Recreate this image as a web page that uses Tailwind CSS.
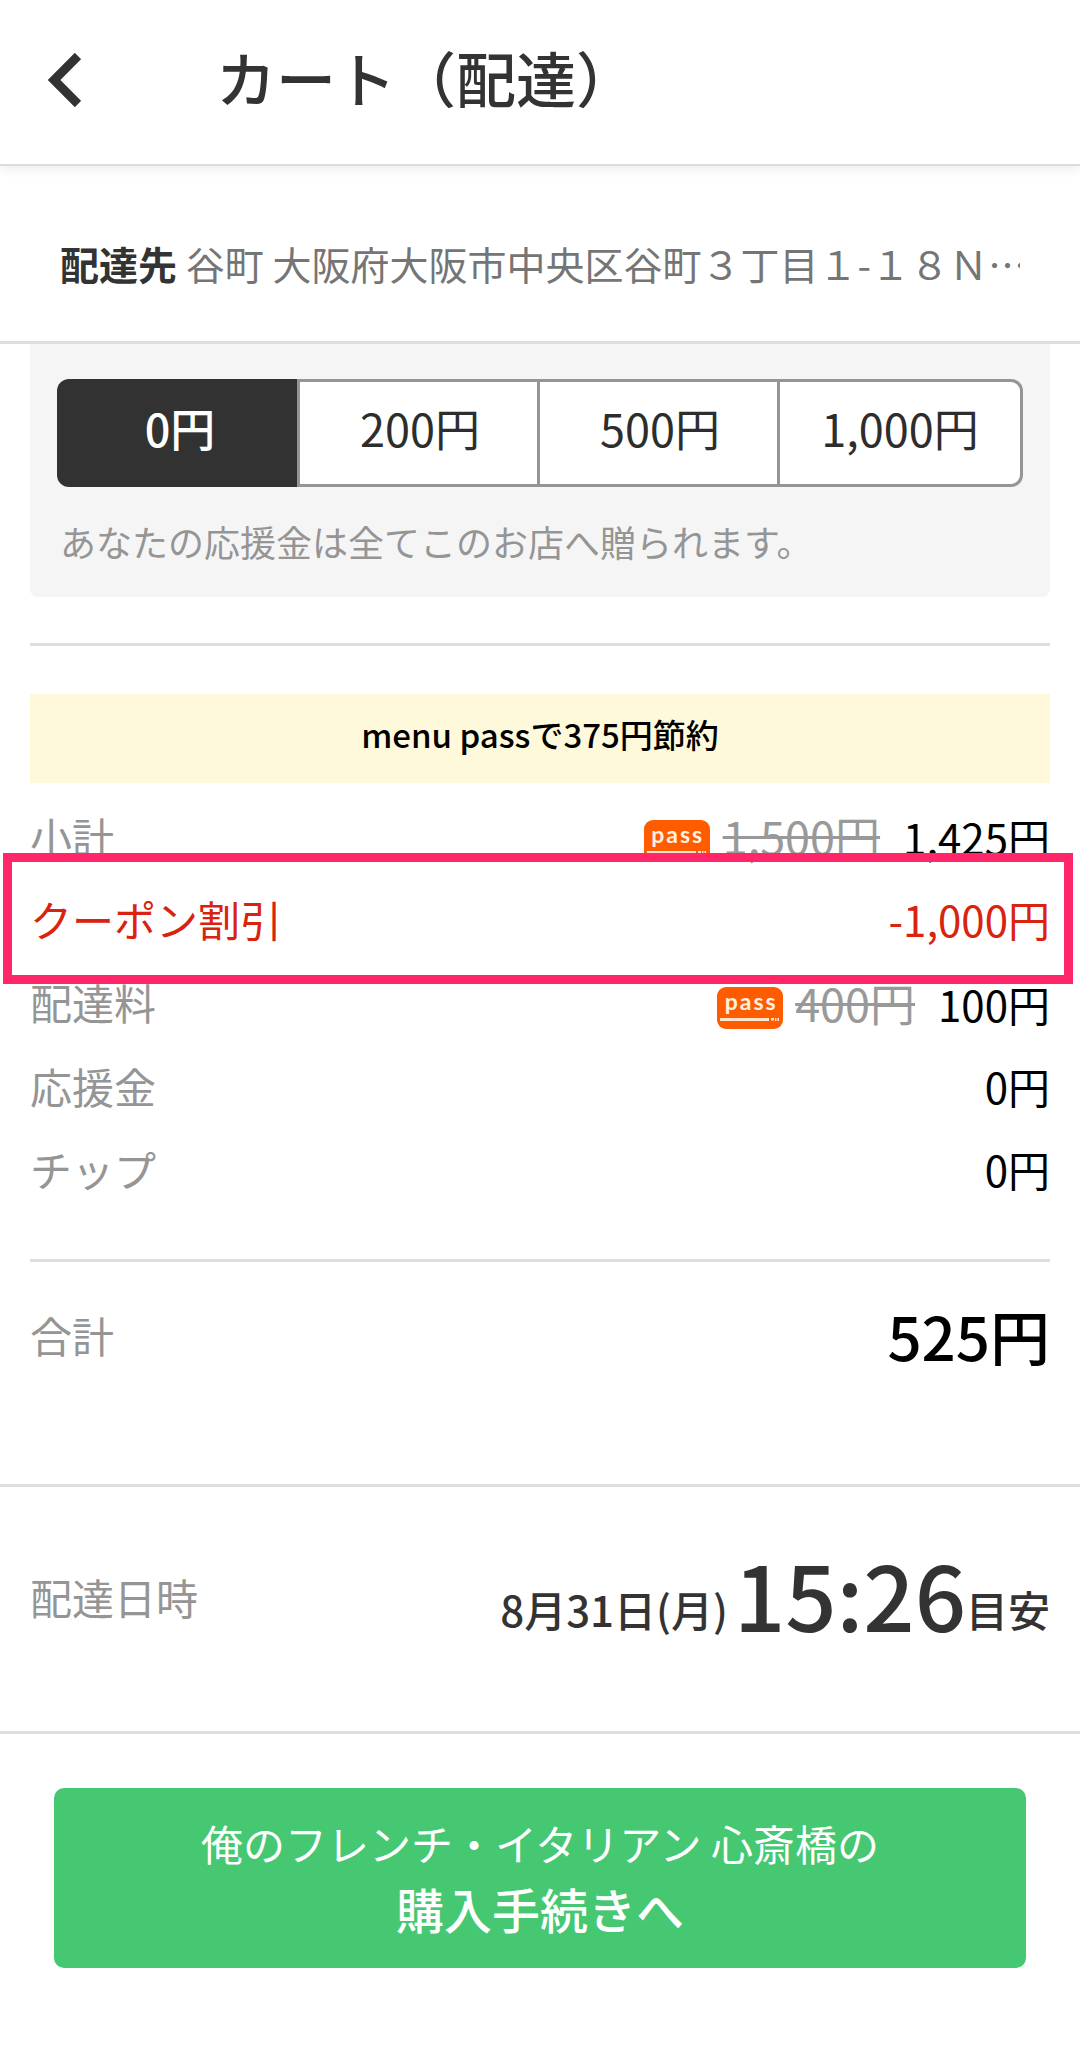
<!DOCTYPE html>
<html lang="ja">
<head>
<meta charset="utf-8">
<title>カート（配達）</title>
<script src="https://cdn.jsdelivr.net/npm/@tailwindcss/browser@4"></script>
</head>
<body class="bg-white font-['Noto_Sans_CJK_JP',sans-serif] text-[#333] leading-none w-[1080px] h-[2060px] overflow-hidden">
  <header class="h-[166px] border-b-2 border-[#dcdcdc] shadow-[0_4px_10px_rgba(0,0,0,0.07)] flex items-center pl-12 pb-1">
    <svg class="w-[33px] h-[54px] shrink-0" viewBox="0 0 33 54" fill="none" stroke="#333" stroke-width="9"><path d="M30 3 L6 27 L30 51"/></svg>
    <h1 class="ml-[135px] mb-[7px] text-[60px] font-medium whitespace-nowrap">カート（配達）</h1>
  </header>

  <section class="h-[178px] border-b-3 border-[#dedede] px-[60px] pt-[19px] flex items-center">
    <p class="text-[39px] leading-[56px] text-[#757575] whitespace-nowrap overflow-hidden"><span class="font-bold text-[#333]">配達先</span> 谷町 大阪府大阪市中央区谷町３丁目１-１８Ｎ…</p>
  </section>

  <main>
    <div class="px-[30px] h-[1140px]">
      <!-- Support amount -->
      <section class="h-[253px] bg-[#f5f5f5] rounded-b-lg pl-[27px] pt-[35px]">
        <div class="flex h-[108px] w-[966px] text-[45px] text-[#2d2d2d]">
          <button class="w-[243px] bg-[#323232] text-white font-medium rounded-l-xl border-r-3 border-[#959595] pl-[6px] pb-[11px]">0円</button>
          <button class="w-[240px] bg-white border-y-3 border-r-3 border-[#959595] pl-[3px] pb-[11px]">200円</button>
          <button class="w-[240px] bg-white border-y-3 border-r-3 border-[#959595] pl-[3px] pb-[11px]">500円</button>
          <button class="w-[243px] bg-white border-y-3 border-r-3 border-[#959595] rounded-r-xl pb-[11px]">1,000円</button>
        </div>
        <p class="h-[107px] flex items-center pl-[3px] text-[36px] text-[#959595]">あなたの応援金は全てこのお店へ贈られます。</p>
      </section>

      <hr class="mt-[46px] border-t-3 border-[#dedede]">

      <p class="mt-[48px] h-[89px] pb-[8px] bg-[#fff9dc] flex items-center justify-center text-[33px] font-medium text-black">menu passで375円節約</p>

      <!-- Price breakdown -->
      <dl class="mt-[11px] h-[417px] grid grid-rows-5 text-[42px] text-black relative">
        <div class="flex items-center justify-between">
          <dt class="text-[#959595]">小計</dt>
          <dd class="flex items-center">
            <span class="w-[66px] h-[42px] mt-[11px] mr-[13px] rounded-[9px] bg-[#ff5c00] flex flex-col items-center">
              <span class="h-[31px] font-['Lato'] font-bold text-[23px] leading-[28px] tracking-[2px] pl-[2px] text-[#fff0e0]">pass</span>
              <svg class="w-[60px] h-[3px]" viewBox="0 0 60 3"><path d="M0 1.5H49M51 1h3M55 1.5h1.5M57.5 1.5h1.5" stroke="#ffe6d0" stroke-width="3"/></svg>
            </span>
            <span class="flex items-baseline gap-[23px]"><s class="text-[45px] text-[#999] decoration-[2.5px]">1,500円</s><span>1,425円</span></span>
          </dd>
        </div>
        <div class="flex items-center justify-between text-[#d9230f]"><dt>クーポン割引</dt><dd>-1,000円</dd></div>
        <div class="flex items-center justify-between">
          <dt class="text-[#959595]">配達料</dt>
          <dd class="flex items-center">
            <span class="w-[66px] h-[42px] mt-[11px] mr-3 rounded-[9px] bg-[#ff5c00] flex flex-col items-center">
              <span class="h-[31px] font-['Lato'] font-bold text-[23px] leading-[28px] tracking-[2px] pl-[2px] text-[#fff0e0]">pass</span>
              <svg class="w-[60px] h-[3px]" viewBox="0 0 60 3"><path d="M0 1.5H49M51 1h3M55 1.5h1.5M57.5 1.5h1.5" stroke="#ffe6d0" stroke-width="3"/></svg>
            </span>
            <span class="flex items-baseline gap-[23px]"><s class="text-[45px] text-[#999] decoration-[2.5px]">400円</s><span>100円</span></span>
          </dd>
        </div>
        <div class="flex items-center justify-between"><dt class="text-[#959595]">応援金</dt><dd>0円</dd></div>
        <div class="flex items-center justify-between"><dt class="text-[#959595]">チップ</dt><dd>0円</dd></div>
        <!-- Highlight frame around the coupon row -->
        <div class="absolute -left-[27px] top-[59px] w-[1070px] h-[131px] border-9 border-[#ff276a]"></div>
      </dl>

      <hr class="mt-[48px] border-t-3 border-[#dedede]">

      <div class="h-[145px] flex items-center justify-between">
        <span class="text-[42px] text-[#959595]">合計</span>
        <span class="text-[60px] font-medium text-black">525円</span>
      </div>
    </div>

    <!-- Delivery time -->
    <section class="h-[250px] border-y-3 border-[#dedede] px-[30px] pb-[25px] flex items-center justify-between">
      <span class="text-[42px] text-[#959595]">配達日時</span>
      <p class="flex items-end pb-[8px] text-[42px] font-medium whitespace-nowrap">
        <span class="mb-[8px] mr-[6px]">8月31日(月)</span><span class="text-[90px]">15:26</span><span class="mb-[8px]">目安</span>
      </p>
    </section>

    <button class="mt-[54px] mx-[54px] w-[972px] h-[180px] rounded-[10px] bg-[#45c871] text-white flex flex-col items-center pt-[23px]">
      <span class="text-[42px] leading-[64px]">俺のフレンチ・イタリアン 心斎橋の</span>
      <span class="text-[48px] leading-[66px] font-medium">購入手続きへ</span>
    </button>
  </main>
</body>
</html>
